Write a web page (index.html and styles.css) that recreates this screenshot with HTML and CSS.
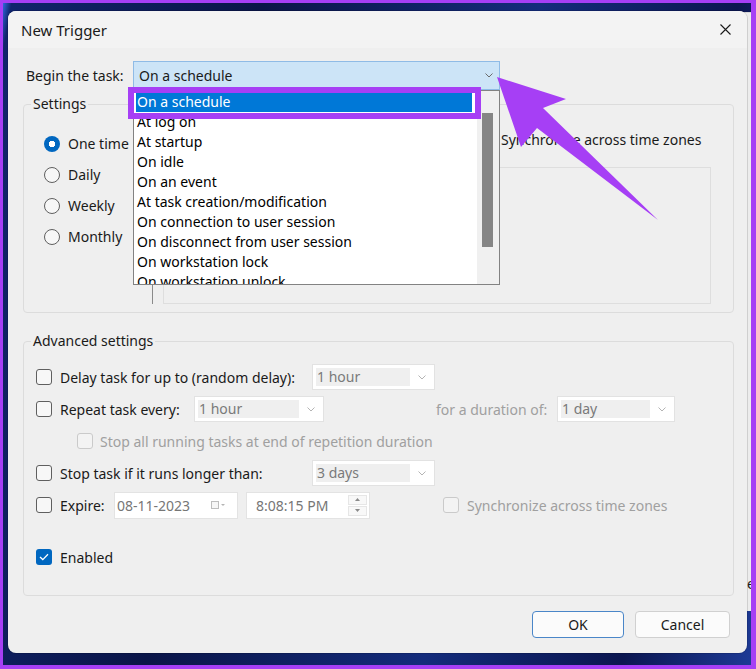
FILE: index.html
```html
<!DOCTYPE html>
<html lang="en">
<head>
    <meta charset="UTF-8">
    <meta name="viewport" content="width=device-width, initial-scale=1.0">
    <title>New Trigger</title>
    <link rel="stylesheet" href="styles.css">
</head>
<body>
    <div class="desktop">
        <!-- window behind the dialog -->
        <div class="back-window"><span class="back-text">el</span></div>

        <div class="dialog">
            <div class="title-bar">
                <span class="title">New Trigger</span>
                <span class="close-btn">
                    <svg width="11" height="11" viewBox="0 0 11 11"><path d="M0.5 0.5L10.5 10.5M10.5 0.5L0.5 10.5" stroke="#1a1a1a" stroke-width="1.1"/></svg>
                </span>
            </div>

            <div class="dialog-body">
                <!-- begin the task -->
                <div class="begin-row">
                    <span class="begin-label">Begin the task:</span>
                    <div class="combo-wrap">
                        <div class="combo-main">
                            <span>On a schedule</span>
                            <svg width="8" height="5" viewBox="0 0 8 5"><path d="M0.5 0.5L4 4L7.5 0.5" fill="none" stroke="#6b6b6b"/></svg>
                        </div>
                        <div class="dropdown">
                            <div class="dropdown-items">
                                <div class="item selected">On a schedule</div>
                                <div class="item">At log on</div>
                                <div class="item">At startup</div>
                                <div class="item">On idle</div>
                                <div class="item">On an event</div>
                                <div class="item">At task creation/modification</div>
                                <div class="item">On connection to user session</div>
                                <div class="item">On disconnect from user session</div>
                                <div class="item">On workstation lock</div>
                                <div class="item">On workstation unlock</div>
                            </div>
                            <div class="dropdown-scroll"><div class="thumb"></div></div>
                        </div>
                        <div class="callout-box"></div>
                    </div>
                </div>

                <!-- settings -->
                <fieldset class="group settings">
                    <legend>Settings</legend>
                    <div class="settings-inner">
                        <div class="radio-col">
                            <div class="radio-row"><span class="radio checked"></span>One time</div>
                            <div class="radio-row"><span class="radio"></span>Daily</div>
                            <div class="radio-row"><span class="radio"></span>Weekly</div>
                            <div class="radio-row"><span class="radio"></span>Monthly</div>
                        </div>
                        <div class="schedule-col">
                            <div class="start-row">
                                <span class="check"></span>
                                <span>Synchronize across time zones</span>
                            </div>
                            <div class="schedule-panel"></div>
                        </div>
                    </div>
                </fieldset>

                <!-- advanced settings -->
                <fieldset class="group advanced">
                    <legend>Advanced settings</legend>

                    <div class="adv-row">
                        <span class="check"></span>
                        <span class="lbl w-252">Delay task for up to (random delay):</span>
                        <div class="combo w-123">
                            <span class="combo-value">1 hour</span>
                            <span class="combo-arrow"><svg width="8" height="5" viewBox="0 0 8 5"><path d="M0.5 0.5L4 4L7.5 0.5" fill="none" stroke="#b4b4b4"/></svg></span>
                        </div>
                    </div>

                    <div class="adv-row">
                        <span class="check"></span>
                        <span class="lbl w-134">Repeat task every:</span>
                        <div class="combo w-130">
                            <span class="combo-value">1 hour</span>
                            <span class="combo-arrow"><svg width="8" height="5" viewBox="0 0 8 5"><path d="M0.5 0.5L4 4L7.5 0.5" fill="none" stroke="#b4b4b4"/></svg></span>
                        </div>
                        <span class="lbl disabled duration-label">for a duration of:</span>
                        <div class="combo w-118">
                            <span class="combo-value">1 day</span>
                            <span class="combo-arrow"><svg width="8" height="5" viewBox="0 0 8 5"><path d="M0.5 0.5L4 4L7.5 0.5" fill="none" stroke="#b4b4b4"/></svg></span>
                        </div>
                    </div>

                    <div class="adv-row indent">
                        <span class="check check-disabled"></span>
                        <span class="lbl disabled">Stop all running tasks at end of repetition duration</span>
                    </div>

                    <div class="adv-row">
                        <span class="check"></span>
                        <span class="lbl w-252">Stop task if it runs longer than:</span>
                        <div class="combo w-123">
                            <span class="combo-value">3 days</span>
                            <span class="combo-arrow"><svg width="8" height="5" viewBox="0 0 8 5"><path d="M0.5 0.5L4 4L7.5 0.5" fill="none" stroke="#b4b4b4"/></svg></span>
                        </div>
                    </div>

                    <div class="adv-row">
                        <span class="check"></span>
                        <span class="lbl w-54">Expire:</span>
                        <div class="field date-field">
                            <span>08-11-2023</span>
                            <svg class="cal-icon" width="15" height="10" viewBox="0 0 15 10"><rect x="0.5" y="1.5" width="7" height="7" fill="#f6f6f6" stroke="#bdbdbd"/><path d="M10 4H14L12 6Z" fill="#b5b5b5"/></svg>
                        </div>
                        <div class="field time-field">
                            <span>8:08:15 PM</span>
                            <div class="spin">
                                <span class="spin-btn"><svg width="5" height="3" viewBox="0 0 5 3"><path d="M0 3L2.5 0L5 3Z" fill="#8a8a8a"/></svg></span>
                                <span class="spin-btn"><svg width="5" height="3" viewBox="0 0 5 3"><path d="M0 0L2.5 3L5 0Z" fill="#8a8a8a"/></svg></span>
                            </div>
                        </div>
                        <span class="check check-disabled sync-check"></span>
                        <span class="lbl disabled">Synchronize across time zones</span>
                    </div>

                    <div class="adv-row enabled-row">
                        <span class="check checked">
                            <svg width="10" height="8" viewBox="0 0 10 8"><path d="M1 4L3.8 6.6L9 1.2" fill="none" stroke="#fff" stroke-width="1.3"/></svg>
                        </span>
                        <span class="lbl">Enabled</span>
                    </div>
                </fieldset>

                <div class="button-row">
                    <button class="btn btn-default">OK</button>
                    <button class="btn btn-cancel">Cancel</button>
                </div>
            </div>
        </div>

        <!-- annotation arrow -->
        <svg class="pointer-arrow" width="756" height="669" viewBox="0 0 756 669">
            <polygon points="497,77 566,99 543,108 658,220 537,128 521,147" fill="#a63ff5"/>
        </svg>
    </div>
</body>
</html>
```

FILE: styles.css
```css
body {
    margin: 0;
    background: #a63ff5;
    font-family: "Noto Sans", "Liberation Sans", sans-serif;
    font-size: 14px;
    color: #1a1a1a;
}

.desktop {
    position: relative;
    width: 756px;
    height: 669px;
    box-sizing: border-box;
    border-style: solid;
    border-color: #a63ff5;
    border-width: 3px 5px 4px 3px;
    padding: 8px 0 0 5px;
    background: linear-gradient(100deg, #2f66dc 0%, #10246c 1%, #0a1548 30%, #142c7c 62%, #0b1650 85%, #1d3a96 100%);
    overflow: hidden;
}

.back-window {
    position: absolute;
    left: 700px;
    top: 9px;
    width: 60px;
    height: 598px;
    background: #ececec;
    border-top: 1px solid #d6d6d6;
}

.back-window .back-text {
    position: absolute;
    left: 44px;
    top: 561px;
    line-height: 20px;
}

.dialog {
    position: relative;
    z-index: 1;
    width: 739px;
    height: 642px;
    background: #efefef;
    border-radius: 8px;
    overflow: hidden;
    box-shadow: 0 0 0 1px rgba(0, 0, 0, 0.12);
}

.title-bar {
    height: 37px;
    display: flex;
    align-items: center;
    justify-content: space-between;
    padding: 0 16px 0 13px;
    background: #f3f3f3;
}

.title {
    font-size: 15px;
}

.close-btn {
    display: flex;
}

.dialog-body {
    padding: 13px 13px 0 15px;
}

/* begin the task */
.begin-row {
    display: flex;
    align-items: center;
    height: 29px;
}

.begin-label {
    width: 110px;
    padding-left: 3px;
    box-sizing: border-box;
}

.combo-wrap {
    position: relative;
    z-index: 2;
    width: 367px;
    height: 29px;
}

.combo-main {
    height: 29px;
    box-sizing: border-box;
    border: 1px solid #8fbbe6;
    background: #cce4f7;
    display: flex;
    align-items: center;
    justify-content: space-between;
    padding: 0 6px 0 5px;
}

.dropdown {
    position: absolute;
    top: 29px;
    left: 0;
    width: 367px;
    height: 195px;
    box-sizing: border-box;
    border: 1px solid #828282;
    background: #fff;
    display: flex;
    overflow: hidden;
}

.dropdown-items {
    flex: 1;
    padding: 1px 5px 0 2px;
}

.dropdown-items .item {
    height: 20px;
    line-height: 20px;
    padding-left: 1px;
    color: #000;
    white-space: nowrap;
}

.dropdown-items .item.selected {
    background: #0078d7;
    color: #fff;
}

.dropdown-scroll {
    width: 22px;
    background: #f0f0f0;
}

.dropdown-scroll .thumb {
    width: 11px;
    height: 134px;
    margin: 22px 0 0 5px;
    background: #858585;
}

.callout-box {
    position: absolute;
    left: -5px;
    top: 26px;
    width: 353px;
    height: 32px;
    box-sizing: border-box;
    border: 6px solid #a63ff5;
}

/* group boxes */
.group {
    margin: 4px 0 0;
    padding: 6px 12px 8px;
    border: 1px solid #dcdcdc;
    border-radius: 4px;
    min-width: 0;
}

.group legend {
    padding: 0 2px;
    margin-left: -5px;
    line-height: 20px;
}

.settings-inner {
    display: flex;
}

.radio-col {
    width: 116px;
    box-sizing: border-box;
    padding: 8px 0 0 8px;
}

.radio-row {
    height: 31px;
    display: flex;
    align-items: center;
    white-space: nowrap;
}

.radio {
    width: 16px;
    height: 16px;
    box-sizing: border-box;
    border: 1px solid #5f5f5f;
    border-radius: 50%;
    background: #f7f7f7;
    margin-right: 8px;
    flex-shrink: 0;
}

.radio.checked {
    border: none;
    background: radial-gradient(circle, #fff 0 3px, #0067c0 3.5px);
}

.schedule-col {
    flex: 1;
    border-left: 1px solid #8a8a8a;
    padding: 3px 10px 0 10px;
}

.start-row {
    height: 32px;
    display: flex;
    align-items: center;
    white-space: nowrap;
    padding-left: 314px;
}

.schedule-panel {
    margin-top: 12px;
    height: 137px;
    box-sizing: border-box;
    border: 1px solid #dedede;
}

.advanced {
    margin-top: 18px;
    padding: 10px 12px 22px;
}

.adv-row {
    height: 32px;
    display: flex;
    align-items: center;
    white-space: nowrap;
}

.adv-row.indent {
    padding-left: 41px;
}

.adv-row.indent .check {
    margin-right: 7px;
}

.enabled-row {
    margin-top: 20px;
}

.check {
    width: 16px;
    height: 16px;
    box-sizing: border-box;
    border: 1px solid #5f5f5f;
    border-radius: 3px;
    background: #f7f7f7;
    margin-right: 8px;
    flex-shrink: 0;
    display: flex;
    align-items: center;
    justify-content: center;
}

.check.check-disabled {
    border-color: #cacaca;
    background: #f3f3f3;
}

.check.checked {
    border: none;
    background: #0067c0;
}

.sync-check {
    margin-left: 73px;
}

.lbl.disabled {
    color: #a0a0a0;
}

.w-252 { width: 252px; }
.w-134 { width: 134px; }
.w-54 { width: 54px; }

.duration-label {
    margin-left: 112px;
    width: 121px;
}

/* disabled combo boxes */
.combo {
    height: 26px;
    box-sizing: border-box;
    border: 1px solid #e2e2e2;
    background: #fff;
    padding: 3px 0 3px 3px;
    display: flex;
}

.w-123 { width: 123px; }
.w-130 { width: 130px; }
.w-118 { width: 118px; }

.combo-value {
    flex: 1;
    background: #efefef;
    color: #7a7a7a;
    line-height: 18px;
    padding-left: 1px;
}

.combo-arrow {
    width: 24px;
    display: flex;
    align-items: center;
    justify-content: center;
}

.field {
    height: 27px;
    box-sizing: border-box;
    border: 1px solid #e3e3e3;
    background: #fff;
    display: flex;
    align-items: center;
    color: #767676;
}

.date-field {
    width: 124px;
    padding-left: 2px;
    margin-right: 8px;
}

.cal-icon {
    margin-left: 21px;
}

.time-field {
    width: 124px;
    padding-left: 9px;
}

.spin {
    margin-left: auto;
    margin-right: 2px;
    display: flex;
    flex-direction: column;
    gap: 1px;
}

.spin-btn {
    width: 19px;
    height: 10px;
    box-sizing: border-box;
    border: 1px solid #e6e6e6;
    background: #f8f8f8;
    display: flex;
    align-items: center;
    justify-content: center;
}

.button-row {
    display: flex;
    justify-content: flex-end;
    gap: 11px;
    margin-top: 15px;
    padding-right: 4px;
}

.btn {
    height: 27px;
    border: 1px solid #d0d0d0;
    border-radius: 4px;
    background: #fbfbfb;
    font-family: inherit;
    font-size: 14px;
    color: #1a1a1a;
    padding: 0;
}

.btn-default {
    width: 92px;
    border-color: #4a86c8;
}

.btn-cancel {
    width: 95px;
}

.pointer-arrow {
    position: absolute;
    left: -3px;
    top: -3px;
    z-index: 5;
}
```
